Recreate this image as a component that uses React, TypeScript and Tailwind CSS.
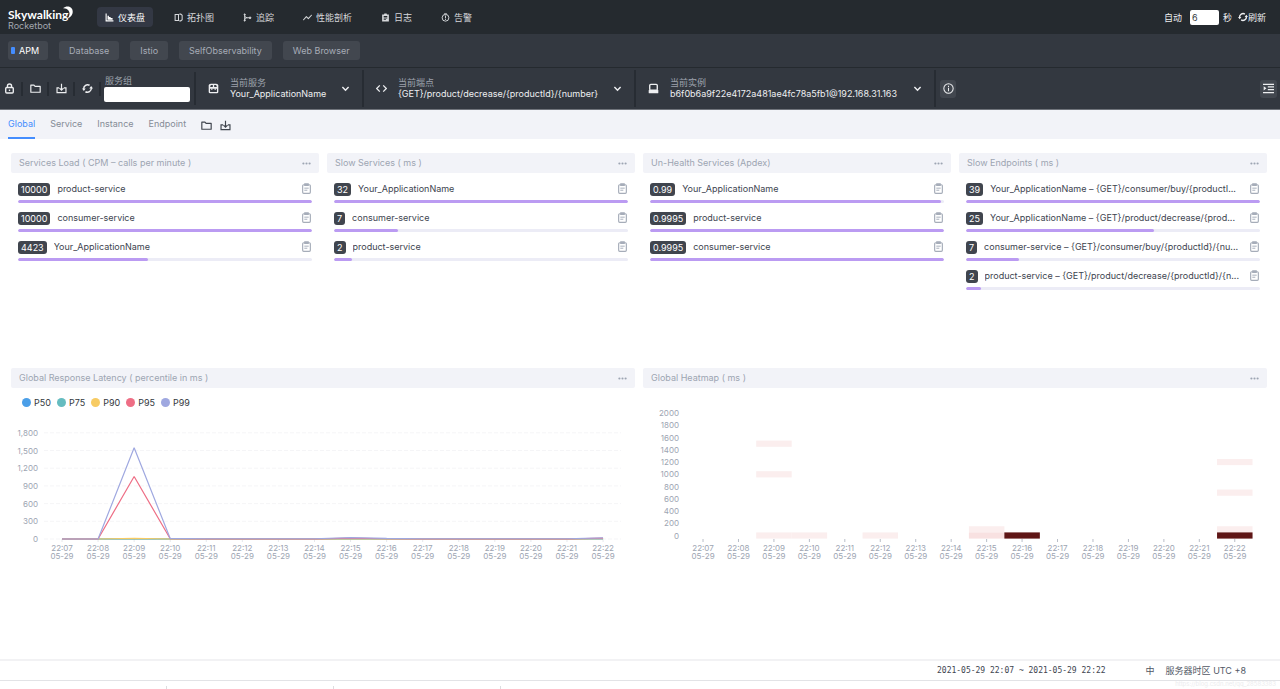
import { useState, type ReactNode } from 'react';

const NAV = [
    { label: '仪表盘', icon: 'chart' },
    { label: '拓扑图', icon: 'topology' },
    { label: '追踪', icon: 'trace' },
    { label: '性能剖析', icon: 'profile' },
    { label: '日志', icon: 'log' },
    { label: '告警', icon: 'alarm' },
];

const GROUPS = ['APM', 'Database', 'Istio', 'SelfObservability', 'Web Browser'];
const TABS = ['Global', 'Service', 'Instance', 'Endpoint'];

const LISTS = [
    {
        title: 'Services Load ( CPM – calls per minute )',
        max: 10000,
        items: [
            { value: 10000, name: 'product-service' },
            { value: 10000, name: 'consumer-service' },
            { value: 4423, name: 'Your_ApplicationName' },
        ],
    },
    {
        title: 'Slow Services ( ms )',
        max: 32,
        items: [
            { value: 32, name: 'Your_ApplicationName' },
            { value: 7, name: 'consumer-service' },
            { value: 2, name: 'product-service' },
        ],
    },
    {
        title: 'Un-Health Services (Apdex)',
        max: 0.9995,
        items: [
            { value: 0.99, name: 'Your_ApplicationName' },
            { value: 0.9995, name: 'product-service' },
            { value: 0.9995, name: 'consumer-service' },
        ],
    },
    {
        title: 'Slow Endpoints ( ms )',
        max: 39,
        items: [
            { value: 39, name: 'Your_ApplicationName – {GET}/consumer/buy/{productI...' },
            { value: 25, name: 'Your_ApplicationName – {GET}/product/decrease/{prod...' },
            { value: 7, name: 'consumer-service – {GET}/consumer/buy/{productId}/{nu...' },
            { value: 2, name: 'product-service – {GET}/product/decrease/{productId}/{n...' },
        ],
    },
];

const SERIES = [
    { name: 'P50', color: '#4b9fe8', data: [0, 0, 2, 0, 0, 0, 0, 0, 0, 0, 0, 0, 0, 0, 0, 2] },
    { name: 'P75', color: '#65bcc0', data: [0, 0, 4, 0, 0, 0, 0, 0, 4, 0, 0, 0, 0, 0, 0, 4] },
    { name: 'P90', color: '#f7cb63', data: [0, 0, 10, 0, 0, 0, 0, 0, 8, 0, 0, 0, 0, 0, 0, 8] },
    { name: 'P95', color: '#ee6e85', data: [0, 0, 1060, 4, 0, 0, 0, 0, 14, 4, 0, 0, 0, 0, 0, 14] },
    { name: 'P99', color: '#9fa8e0', data: [0, 0, 1545, 10, 4, 4, 4, 4, 22, 10, 4, 4, 4, 4, 4, 20] },
];

const TIMES = Array.from({ length: 16 }, (_, i) => `22:${String(i + 7).padStart(2, '0')}`);

// [minute index, latency bucket, colour]
const CELLS: [number, number, string][] = [
    [2, 1500, '#fbeeee'],
    [2, 1000, '#fbeeee'],
    [2, 0, '#fbeeee'],
    [3, 0, '#fbeeee'],
    [5, 0, '#fbeeee'],
    [8, 100, '#fbeeee'],
    [8, 0, '#f8e1e1'],
    [9, 0, '#5f1616'],
    [15, 1200, '#fbeeee'],
    [15, 700, '#fbeeee'],
    [15, 100, '#fbeeee'],
    [15, 0, '#5f1616'],
];

const ICONS: Record<string, ReactNode> = {
    chart: (
        <g fill="currentColor">
            <path d="M1 1h2v12h12v2H1z" />
            <path d="M4.500 5h2.500v2h3v2h3.500v3h-9z" />
        </g>
    ),
    topology: (
        <g fill="none" stroke="currentColor" strokeWidth="1.800">
            <path d="M8 2.500H2v11h6z" />
            <path d="M9.500 2H12l2.500 2v8L12 14H9.500" />
        </g>
    ),
    trace: (
        <g fill="none" stroke="currentColor" strokeWidth="1.700">
            <path d="M3 2v12M3 4.500c0 3.500 3 4 8 4M3 12.500c0-2.500 2-4 5-4" />
            <circle cx="3" cy="2.500" r="1" fill="currentColor" />
            <circle cx="3" cy="13.500" r="1" fill="currentColor" />
            <circle cx="12.500" cy="8.500" r="1.500" fill="currentColor" />
        </g>
    ),
    profile: (
        <g fill="none" stroke="currentColor" strokeWidth="1.900" strokeLinecap="round" strokeLinejoin="round">
            <path d="M1 12l5-5.500 3.500 3.500L15 4" />
        </g>
    ),
    log: (
        <path
            fill="currentColor"
            fillRule="evenodd"
            d="M6 1h4l.6 1.500H14V15H2V2.500h3.400zM4.800 5.500V7h6.400V5.500zm0 2.700v1.500h6.400V8.200zm0 2.700v1.500h4v-1.500z"
        />
    ),
    alarm: (
        <g fill="none" stroke="currentColor" strokeWidth="1.700">
            <circle cx="8" cy="8.500" r="6" />
            <path d="M8 4.500v5M8 10.500v1.800M5.500 1.500h5" />
        </g>
    ),
    lock: (
        <g fill="none" stroke="currentColor" strokeWidth="2">
            <rect x="2.500" y="6.500" width="11" height="8" rx="1.500" />
            <path d="M5 6.500V4.500a3 3 0 0 1 6 0v2" />
            <path d="M8 9.500v2.200" />
        </g>
    ),
    folder: <path d="M1.200 3h4.600l1.600 1.800h7.400V13.500H1.200z" fill="none" stroke="currentColor" strokeWidth="1.700" strokeLinejoin="round" />,
    download: (
        <g fill="none" stroke="currentColor" strokeWidth="1.700">
            <path d="M4.500 7H1.500v7h13V7h-3" />
            <path d="M8 1v9M5 7.500l3 3 3-3" />
        </g>
    ),
    refresh: (
        <g>
            <path d="M2.500 8.500A5.600 5.600 0 0 1 11 3.300M13.500 7.500A5.600 5.600 0 0 1 5 12.700" fill="none" stroke="currentColor" strokeWidth="2.200" />
            <path d="M0 8h5.400L2.700 11.600zM16 8h-5.400L13.300 4.400z" fill="currentColor" />
        </g>
    ),
    service: (
        <g>
            <path d="M4.500 1h7A3.500 3.500 0 0 1 15 5v8a2 2 0 0 1-2 2H3a2 2 0 0 1-2-2V5a3.500 3.500 0 0 1 3.500-4z" fill="currentColor" />
            <path d="M5 3h2v2.800H3.300C3.300 4 4 3 5 3zM9 3h2c1 0 1.700 1 1.700 2.800H9zM3 8.500h10V13H3z" fill="#333840" />
            <path d="M4.500 8h2v1.800h-2zM9.500 8h2v1.800h-2z" fill="currentColor" />
        </g>
    ),
    code: <path d="M5.500 3.500L1 8l4.500 4.500M10.500 3.500L15 8l-4.500 4.500" fill="none" stroke="currentColor" strokeWidth="1.800" />,
    disk: (
        <g>
            <rect x="2.500" y="2" width="11" height="8.500" rx="1.500" fill="none" stroke="currentColor" strokeWidth="2" />
            <rect x="1" y="10" width="14" height="5" rx="1" fill="currentColor" />
        </g>
    ),
    chevron: <path d="M2.500 5.500L8 11l5.500-5.500" fill="none" stroke="currentColor" strokeWidth="2.600" />,
    info: (
        <g fill="none" stroke="currentColor" strokeWidth="1.500">
            <circle cx="8" cy="8" r="6.800" />
            <path d="M8 7v5M8 4v1.800" />
        </g>
    ),
    menu: (
        <g fill="currentColor">
            <path d="M0 1h16v1.800H0zM7 4.900h9v1.800H7zM7 8.800h9v1.800H7zM0 13h16v1.800H0zM1 4.800v6l4-3z" />
        </g>
    ),
    copy: (
        <g fill="none" stroke="currentColor" strokeWidth="1.700">
            <rect x="2.400" y="2.500" width="11.200" height="12.500" rx="1.500" />
            <path d="M5.500 1.300h5v2.200h-5z" fill="currentColor" />
            <path d="M4.800 7.500h6.400M4.800 10.500h4.400" strokeWidth="1.400" />
        </g>
    ),
    dots: (
        <g fill="currentColor">
            <circle cx="2.500" cy="8" r="1.900" />
            <circle cx="8" cy="8" r="1.900" />
            <circle cx="13.500" cy="8" r="1.900" />
        </g>
    ),
};

function Icon({ name, className = 'size-[11px]' }: { name: string; className?: string }) {
    return (
        <svg viewBox="0 0 16 16" className={`shrink-0 ${className}`} aria-hidden="true">
            {ICONS[name]}
        </svg>
    );
}

function Logo() {
    return (
        <a href="#home" className="relative block w-[89px] shrink-0 pt-[3px] pl-2">
            <span className="block font-[Lato] text-[12px] leading-[13px] font-bold text-white">Skywalking</span>
            <span className="block text-[9px] leading-[9px] text-[#a3a7b0]">Rocketbot</span>
            <svg viewBox="0 0 10 13" className="absolute top-[1px] left-[63px] h-[13px] w-[10px]" aria-hidden="true">
                <path d="M0 2.200C4-1 9.500.6 9.700 5.500 9.800 8.700 7.500 11.500 4.500 12.500 7 9.500 7 6.500 5.500 4.500 4 2.600 2 2 0 2.200z" fill="#fff" />
            </svg>
        </a>
    );
}

function Selector({ icon, label, value, className }: { icon: string; label: string; value: string; className: string }) {
    return (
        <button type="button" className={`my-[2px] flex items-center border-r-2 border-[#272c33] px-3 text-left ${className}`}>
            <Icon name={icon} />
            <span className="ml-[11px] flex-1">
                <span className="block leading-[11px] text-[#9da2ac]">{label}</span>
                <span className="block leading-3 whitespace-nowrap text-[#eeeff1]">{value}</span>
            </span>
            <Icon name="chevron" className="size-[9px]" />
        </button>
    );
}

function PanelHeader({ title }: { title: string }) {
    return (
        <header className="flex h-5 items-center justify-between rounded-xs bg-[#f2f3f8] px-2 text-[#9da5b2]">
            <h2 className="leading-5 whitespace-nowrap">{title}</h2>
            <button type="button" aria-label="More">
                <Icon name="dots" className="size-[9px]" />
            </button>
        </header>
    );
}

function TopList({ title, max, items }: (typeof LISTS)[number]) {
    return (
        <section className="min-h-[207px] min-w-0">
            <PanelHeader title={title} />
            <ul className="flex flex-col gap-2 px-[7px] pt-[9px]">
                {items.map((item) => (
                    <li key={item.name}>
                        <div className="flex h-[14px] items-center">
                            <span className="rounded-[3px] bg-[#40454e] px-[3px] leading-[13px] text-white">{item.value}</span>
                            <span className="ml-[7px] min-w-0 flex-1 truncate leading-[14px] text-[#3d444f]">{item.name}</span>
                            <button type="button" aria-label="Copy" className="mb-[2px] text-[#a6adb9]">
                                <Icon name="copy" />
                            </button>
                        </div>
                        <div className="mt-1 h-[3px] overflow-hidden rounded-full bg-[#ececf6]">
                            <div className="h-full rounded-full bg-[#bb9bf2]" style={{ width: `${(item.value / max) * 100}%` }} />
                        </div>
                    </li>
                ))}
            </ul>
        </section>
    );
}

function TimeLabel({ x, y, time }: { x: number; y: number; time: string }) {
    return (
        <text x={x} y={y} textAnchor="middle">
            <tspan>{time}</tspan>
            <tspan x={x} dy={8}>
                05-29
            </tspan>
        </text>
    );
}

function LatencyChart() {
    const px = (i: number) => 51 + i * 36.07;
    const py = (v: number) => 123 - (v / 300) * 17.7;

    return (
        <svg viewBox="0 0 624 150" className="block w-full text-[8px]" fill="#9da5b2" role="img" aria-label="Global Response Latency">
            {[0, 300, 600, 900, 1200, 1500, 1800].map((v) => (
                <g key={v}>
                    <line x1="33" x2="610" y1={py(v)} y2={py(v)} stroke="#f5f5f7" strokeDasharray="4 2" />
                    <text x="27" y={py(v) + 3} textAnchor="end">
                        {v.toLocaleString('en-US')}
                    </text>
                </g>
            ))}
            {TIMES.map((t, i) => (
                <g key={t}>
                    <line x1={px(i)} x2={px(i)} y1="123" y2="126" stroke="#e6e8ec" />
                    <TimeLabel x={px(i)} y={135} time={t} />
                </g>
            ))}
            {SERIES.map((s) => (
                <polyline
                    key={s.name}
                    points={s.data.map((v, i) => `${px(i)},${py(v)}`).join(' ')}
                    fill="none"
                    stroke={s.color}
                    strokeWidth="1.200"
                    strokeLinejoin="bevel"
                />
            ))}
        </svg>
    );
}

function Heatmap() {
    const px = (i: number) => 42.3 + i * 35.45;
    const py = (v: number) => 147.5 - (v / 100) * 6.12;

    return (
        <svg viewBox="0 0 624 178" className="block w-full text-[8px]" fill="#9da5b2" role="img" aria-label="Global Heatmap">
            {Array.from({ length: 11 }, (_, i) => i * 200).map((v) => (
                <text key={v} x="36" y={py(v) + 3} textAnchor="end">
                    {v}
                </text>
            ))}
            {CELLS.map(([i, v, color]) => (
                <rect key={`${i}-${v}`} x={px(i)} y={py(v) - 3.1} width="35.500" height="6.200" fill={color} />
            ))}
            {TIMES.map((t, i) => (
                <g key={t}>
                    <line x1={px(i + 0.5)} x2={px(i + 0.5)} y1="151" y2="154" stroke="#b9bec8" />
                    <TimeLabel x={px(i + 0.5)} y={163} time={t} />
                </g>
            ))}
        </svg>
    );
}

export default function App() {
    const [group, setGroup] = useState('APM');
    const [tab, setTab] = useState('Global');

    return (
        <div className="flex min-h-screen flex-col bg-white font-[Inter,'Noto_Sans_CJK_SC',sans-serif] text-[9px] leading-none">
            <header className="flex h-[34px] items-center bg-[#252a2f] text-[#d5d7da]">
                <Logo />
                <nav className="ml-2 flex gap-[13px]">
                    {NAV.map((item, i) => (
                        <a
                            key={item.label}
                            href={`#${item.icon}`}
                            className={`flex h-5 items-center gap-1 rounded-sm px-2 ${i === 0 ? 'bg-[#333844] text-white' : ''}`}
                        >
                            <Icon name={item.icon} className="size-[9px]" />
                            {item.label}
                        </a>
                    ))}
                </nav>
                <div className="mr-[14px] ml-auto flex items-center text-[#eeeff1]">
                    <label htmlFor="interval">自动</label>
                    <input id="interval" defaultValue="6" className="mr-1 ml-2 h-[15px] w-[29px] rounded-xs bg-white px-[2px] text-[#333840]" />
                    秒
                    <button type="button" className="ml-[6px] flex items-center">
                        <Icon name="refresh" className="size-[10px]" />
                        刷新
                    </button>
                </div>
            </header>

            <div className="flex h-[34px] items-center gap-[11px] border-b border-[#252a2f] bg-[#333840] px-2">
                {GROUPS.map((g) => (
                    <button
                        key={g}
                        type="button"
                        onClick={() => setGroup(g)}
                        className={`flex h-[19px] items-center rounded-[3px] bg-[#42474f] ${g === group ? 'gap-1 pr-[9px] pl-[3px] text-white' : 'px-[10px] text-[#a7acb7]'}`}
                    >
                        {g === group && <span className="h-[7px] w-1 rounded-[1px] bg-[#448dfe]" />}
                        {g}
                    </button>
                ))}
            </div>

            <div className="flex h-[42px] items-stretch border-b border-[#70747b] bg-[#333840] text-[#eeeff1]">
                <div className="flex items-center pl-1">
                    {['lock', 'folder', 'download', 'refresh'].map((name, i) => (
                        <button
                            key={name}
                            type="button"
                            aria-label={name}
                            className={`flex h-[14px] items-center justify-center border-r-2 border-[#272c33] ${i === 0 ? 'w-[19px] pr-[6px]' : 'w-[26px]'}`}
                        >
                            <Icon name={name} />
                        </button>
                    ))}
                </div>
                <div className="my-1 flex flex-col justify-center border-r-2 border-[#272c33] pr-1 pl-[3px]">
                    <label htmlFor="group" className="px-[1px] leading-3 text-[#9da2ac]">
                        服务组
                    </label>
                    <input id="group" className="h-[15px] w-[86px] rounded-xs bg-white px-1 text-[#333840]" />
                </div>
                <Selector icon="service" label="当前服务" value="Your_ApplicationName" className="w-[168px]" />
                <Selector icon="code" label="当前端点" value="{GET}/product/decrease/{productId}/{number}" className="w-[272px]" />
                <Selector icon="disk" label="当前实例" value="b6f0b6a9f22e4172a481ae4fc78a5fb1@192.168.31.163" className="w-[300px]" />
                <button type="button" aria-label="Info" className="ml-1 flex h-[18px] w-4 items-center justify-center self-center rounded-[3px] bg-[#42474f]">
                    <Icon name="info" />
                </button>
                <button type="button" aria-label="Menu" className="mr-[3px] ml-auto flex h-[18px] w-[17px] items-center justify-center self-center rounded-[3px] bg-[#42474f]">
                    <Icon name="menu" />
                </button>
            </div>

            <div className="flex h-[29px] items-stretch gap-[15px] bg-[#f2f3f8] px-2 text-[#858b96]">
                {TABS.map((t) => (
                    <button
                        key={t}
                        type="button"
                        onClick={() => setTab(t)}
                        className={`border-b-2 ${t === tab ? 'border-[#448dfe] text-[#448dfe]' : 'border-transparent'}`}
                    >
                        {t}
                    </button>
                ))}
                <div className="flex items-center gap-2 pt-[2px] text-[#40454e]">
                    <button type="button" aria-label="Import">
                        <Icon name="folder" />
                    </button>
                    <button type="button" aria-label="Export">
                        <Icon name="download" />
                    </button>
                </div>
            </div>

            <main className="flex-1 pt-[14px] pr-[13px] pb-8 pl-[11px]">
                <div className="grid grid-cols-4 gap-2">
                    {LISTS.map((list) => (
                        <TopList key={list.title} {...list} />
                    ))}
                </div>
                <div className="mt-2 grid grid-cols-2 gap-2">
                    <section>
                        <PanelHeader title="Global Response Latency ( percentile in ms )" />
                        <ul className="flex h-7 items-center gap-[6px] pl-[11px] text-[#333840]">
                            {SERIES.map((s) => (
                                <li key={s.name} className="flex items-center gap-[3px]">
                                    <svg viewBox="0 0 10 10" className="size-[9px]" aria-hidden="true">
                                        <circle cx="5" cy="5" r="5" fill={s.color} />
                                    </svg>
                                    {s.name}
                                </li>
                            ))}
                        </ul>
                        <LatencyChart />
                    </section>
                    <section>
                        <PanelHeader title="Global Heatmap ( ms )" />
                        <Heatmap />
                    </section>
                </div>
            </main>

            <footer className="border-t-2 border-[#f2f2f4]">
                <div className="flex h-5 items-center justify-end border-b border-[#e2e3e6] pr-[34px] text-[#515765]">
                    <button type="button" className="mr-10 font-['DejaVu_Sans_Mono',monospace] text-[8px] text-[#3d444f]">
                        2021-05-29 22:07 ~ 2021-05-29 22:22
                    </button>
                    <button type="button" className="mr-[11px]">
                        中
                    </button>
                    <span>服务器时区 UTC +8</span>
                </div>
                <div className="flex h-2 items-end">
                    {[1, 2, 3].map((n) => (
                        <span key={n} className="h-[3px] w-[167px] border-r border-[#dcdde0]" />
                    ))}
                    <span className="mr-1 ml-auto self-start text-[6px] leading-[6px] text-[#ececee]">https://blog.csdn.net/qq_28583383</span>
                </div>
            </footer>
        </div>
    );
}
